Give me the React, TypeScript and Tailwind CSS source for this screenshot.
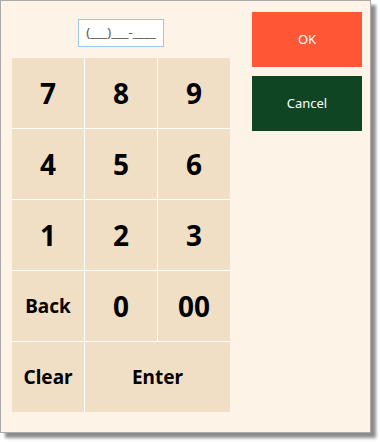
import React, { useState } from 'react';

const keys: { label: string; big: boolean; span?: boolean }[] = [
  { label: '7', big: true },
  { label: '8', big: true },
  { label: '9', big: true },
  { label: '4', big: true },
  { label: '5', big: true },
  { label: '6', big: true },
  { label: '1', big: true },
  { label: '2', big: true },
  { label: '3', big: true },
  { label: 'Back', big: false },
  { label: '0', big: true },
  { label: '00', big: true },
  { label: 'Clear', big: false },
  { label: 'Enter', big: false, span: true },
];

export default function App() {
  const [value] = useState('(___)___-____');

  return (
    <div className="bg-white w-[380px] h-[442px]" style={{ fontFamily: '"Noto Sans", "Open Sans", sans-serif' }}>
      <div className="w-[371px] h-[433px] bg-[#fef3e7] border border-[#a9a9a9] shadow-[5px_5px_3px_rgba(0,0,0,0.45)] flex pl-[11px] pt-[11px]">
        {/* Keypad */}
        <div className="w-[218px] flex flex-col items-center">
          <div className="mt-[7px] mb-[11px] w-[86px] h-[28px] bg-white border border-[#9cc6ee] flex items-center justify-center text-[13px] text-[#555]">
            {value}
          </div>
          <div className="grid grid-cols-[72px_72px_72px] grid-rows-[70px_70px_70px_70px_70px] gap-px bg-white">
            {keys.map((k) => (
              <button
                key={k.label}
                className={`bg-[#f0dfc5] flex items-center justify-center font-bold text-black ${
                  k.big ? 'text-[28px]' : 'text-[19px]'
                } ${k.span ? 'col-span-2' : ''}`}
              >
                {k.label}
              </button>
            ))}
          </div>
        </div>

        {/* Actions */}
        <div className="ml-[22px] w-[110px] flex flex-col gap-[9px]">
          <button className="h-[55px] bg-[#ff5636] text-white text-[13px]">OK</button>
          <button className="h-[55px] bg-[#0f4522] text-white text-[13px]">Cancel</button>
        </div>
      </div>
    </div>
  );
}
